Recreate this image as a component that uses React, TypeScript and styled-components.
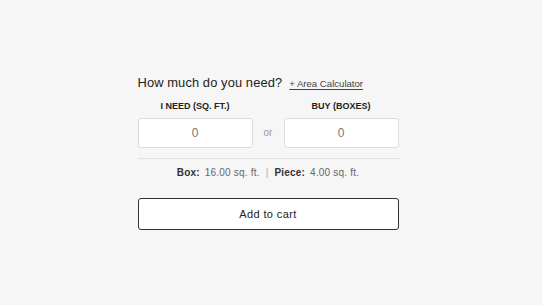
import styled, { createGlobalStyle } from "styled-components";

const Global = createGlobalStyle`
  html, body {
    margin: 0;
    background: #f6f6f6;
    font-family: "Liberation Sans", Arial, sans-serif;
    color: #222;
  }
`;

const Page = styled.main`
  display: flex;
  justify-content: center;
  padding-top: 75px;
`;

const Panel = styled.section`
  width: 261px;
  margin-left: -6px;
  display: flex;
  flex-direction: column;
`;

const TitleRow = styled.div`
  display: flex;
  align-items: baseline;
  gap: 7px;
  height: 18px;
`;

const Title = styled.h2`
  margin: 0;
  font-size: 12.9px;
  font-weight: 400;
  letter-spacing: 0.1px;
  color: #222;
`;

const CalcLink = styled.a`
  font-size: 9.6px;
  color: #444;
  text-decoration: underline;
  text-underline-offset: 2px;
  cursor: pointer;
`;

const Fields = styled.div`
  display: grid;
  grid-template-columns: 115px 1fr 115px;
  align-items: end;
  margin-top: 8px;
`;

const Field = styled.label`
  display: flex;
  flex-direction: column;
  align-items: center;
  gap: 7px;
`;

const FieldLabel = styled.span`
  font-size: 9px;
  font-weight: 700;
  color: #222;
`;

const Input = styled.input`
  box-sizing: border-box;
  width: 100%;
  height: 30px;
  border: 1px solid #dcdcdc;
  border-radius: 3px;
  background: #fff;
  text-align: center;
  font-family: inherit;
  font-size: 12px;
  color: #666;
  outline: none;
  &::placeholder {
    color: #777;
  }
`;

const Or = styled.span`
  font-size: 10px;
  color: #999;
  text-align: center;
  line-height: 30px;
`;

const Divider = styled.hr`
  margin: 10px 0 0;
  border: 0;
  border-top: 1px solid #e2e2e2;
`;

const Info = styled.p`
  margin: 8px 0 0;
  text-align: center;
  font-size: 10px;
  letter-spacing: 0.2px;
  color: #666;
`;

const Key = styled.b`
  color: #333;
  margin-right: 2px;
`;

const Sep = styled.span`
  color: #aaa;
  margin: 0 6px;
`;

const CartButton = styled.button`
  margin-top: 20px;
  height: 32px;
  border: 1px solid #333;
  border-radius: 3px;
  background: #fff;
  font-family: inherit;
  font-size: 11px;
  letter-spacing: 0.4px;
  color: #222;
  cursor: pointer;
`;

export default function App() {
  return (
    <>
      <Global />
      <Page>
        <Panel>
          <TitleRow>
            <Title>How much do you need?</Title>
            <CalcLink>+ Area Calculator</CalcLink>
          </TitleRow>
          <Fields>
            <Field>
              <FieldLabel>I NEED (SQ. FT.)</FieldLabel>
              <Input placeholder="0" />
            </Field>
            <Or>or</Or>
            <Field>
              <FieldLabel>BUY (BOXES)</FieldLabel>
              <Input placeholder="0" />
            </Field>
          </Fields>
          <Divider />
          <Info>
            <Key>Box:</Key> 16.00 sq. ft.
            <Sep>|</Sep>
            <Key>Piece:</Key> 4.00 sq. ft.
          </Info>
          <CartButton>Add to cart</CartButton>
        </Panel>
      </Page>
    </>
  );
}
